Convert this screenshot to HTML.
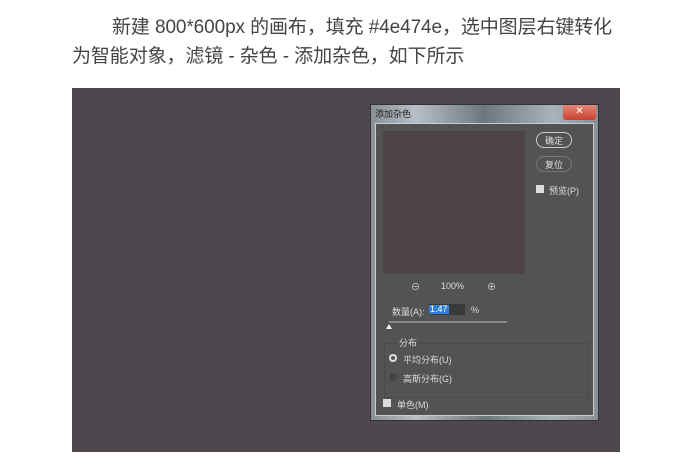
<!DOCTYPE html><html><head><meta charset="utf-8"><style>
body{margin:0;width:690px;height:464px;background:#fff;position:relative;overflow:hidden;font-family:"Liberation Sans","Noto Sans CJK SC",sans-serif}
.t{position:absolute;left:72px;font-size:19px;color:#444;white-space:nowrap;letter-spacing:-0.1px}
.a{position:absolute}
.s{font-size:9px;color:#ddd;position:absolute;white-space:nowrap}
</style></head><body>
<div class="t" style="top:12px;left:112px">新建 800*600px 的画布，填充 #4e474e，选中图层右键转化</div>
<div class="t" style="top:41px">为智能对象，滤镜 - 杂色 - 添加杂色，如下所示</div>
<div class="a" style="left:72px;top:88px;width:548px;height:364px;background:#4e474e"></div>
<div class="a" style="left:370px;top:104px;width:229px;height:317px;background:linear-gradient(90deg,#8a9098,#b8bfc6 20%,#6e767e 50%,#aab2ba 80%,#8a9098);border:1px solid #333;box-sizing:border-box"></div>
<div class="a" style="left:563px;top:105px;width:33px;height:15px;background:linear-gradient(#e8877a,#c8412e);border-radius:0 0 3px 3px;color:#fff;font-size:10px;text-align:center;line-height:14px">✕</div>
<div class="s" style="left:375px;top:107px;color:#222">添加杂色</div>
<div class="a" style="left:375px;top:123px;width:219px;height:293px;background:#535353;border:1px solid #ccc;box-sizing:border-box"></div>
<div class="a" style="left:383px;top:131px;width:142px;height:143px;background:#4d4248"></div>
<div class="a" style="left:536px;top:132px;width:36px;height:16px;border:1px solid #ccc;border-radius:9px;box-sizing:border-box"></div>
<div class="s" style="left:545px;top:134px">确定</div>
<div class="a" style="left:536px;top:156px;width:36px;height:16px;border:1px solid #777;border-radius:9px;box-sizing:border-box"></div>
<div class="s" style="left:545px;top:158px">复位</div>
<div class="a" style="left:536px;top:185px;width:8px;height:8px;background:#ddd"></div>
<div class="s" style="left:549px;top:184px">预览(P)</div>
<div class="s" style="left:411px;top:280px">⊖</div>
<div class="s" style="left:441px;top:281px">100%</div>
<div class="s" style="left:487px;top:280px">⊕</div>
<div class="s" style="left:392px;top:305px">数量(A):</div>
<div class="a" style="left:429px;top:304px;width:36px;height:11px;background:#3a3a3a"></div>
<div class="a" style="left:429px;top:305px;width:20px;height:9px;background:#2f7fd8"></div>
<div class="s" style="left:430px;top:304px;color:#fff">1.47</div>
<div class="s" style="left:471px;top:305px">%</div>
<div class="a" style="left:389px;top:321px;width:118px;height:2px;background:#888"></div>
<div class="a" style="left:386px;top:324px;width:0;height:0;border:3px solid transparent;border-bottom:5px solid #eee;border-top:0"></div>
<div class="a" style="left:384px;top:343px;width:205px;height:55px;border:1px solid #4a4a4a;box-sizing:border-box"></div>
<div class="s" style="left:397px;top:336px;background:#535353;padding:0 2px">分布</div>
<div class="a" style="left:389px;top:354px;width:8px;height:8px;border-radius:50%;background:#ddd;box-shadow:inset 0 0 0 2px #ddd,inset 0 0 0 4px #555"></div>
<div class="s" style="left:403px;top:353px">平均分布(U)</div>
<div class="a" style="left:389px;top:373px;width:8px;height:8px;border-radius:50%;background:#444"></div>
<div class="s" style="left:403px;top:372px">高斯分布(G)</div>
<div class="a" style="left:383px;top:399px;width:8px;height:8px;background:#ddd"></div>
<div class="s" style="left:397px;top:398px">单色(M)</div>
</body></html>
